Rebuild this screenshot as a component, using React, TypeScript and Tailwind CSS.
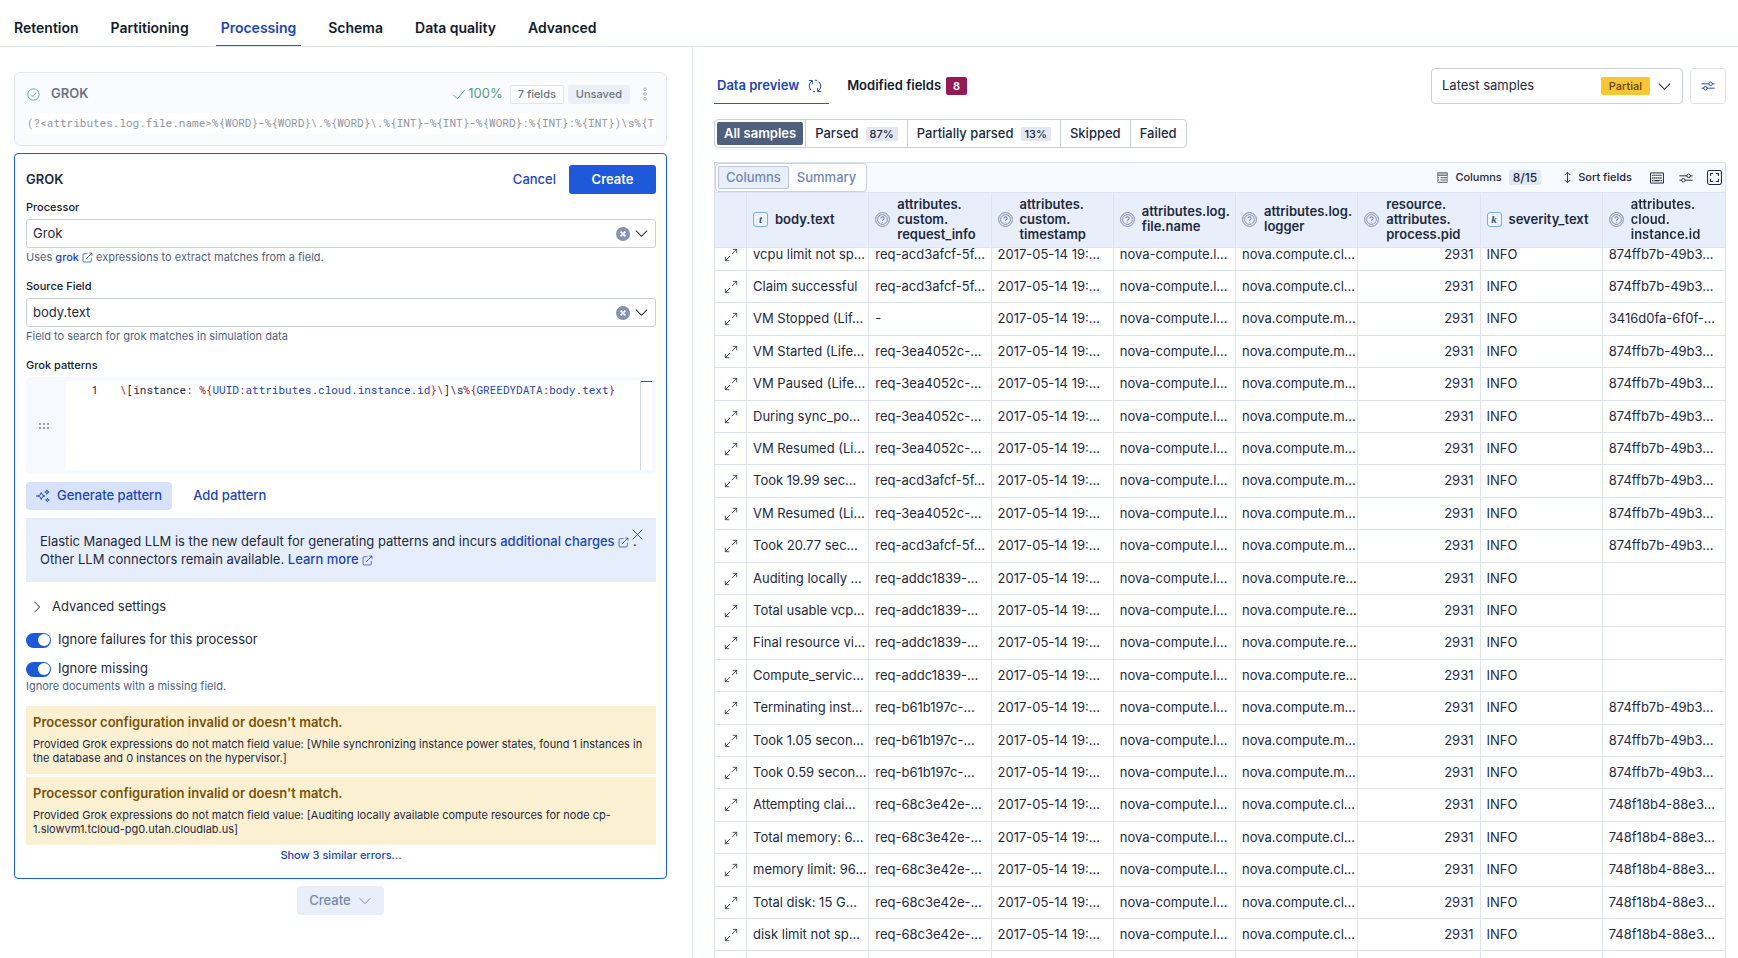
import React, { useLayoutEffect, useRef, useState } from 'react';
import clsx from 'clsx';

type IconProps = { className?: string };

const Svg: React.FC<IconProps & { children: React.ReactNode }> = ({ className, children }) => (
  <svg viewBox="0 0 16 16" fill="none" stroke="currentColor" strokeWidth={1.1} className={clsx('shrink-0', className)} aria-hidden="true">
    {children}
  </svg>
);

const ChevronDown = ({ className }: IconProps) => (
  <Svg className={className}><path d="M2 5l6 6 6-6" /></Svg>
);

const ChevronRight = ({ className }: IconProps) => (
  <Svg className={className}><path d="M5 2l6 6-6 6" /></Svg>
);

const Check = ({ className }: IconProps) => (
  <Svg className={className}><path d="M1.5 9l4.5 4.5L15 3" /></Svg>
);

const CheckCircle = ({ className }: IconProps) => (
  <Svg className={className}>
    <circle cx="8" cy="8" r="7" />
    <path d="M5 8.3l2.2 2.2L11.3 6" />
  </Svg>
);

const Cross = ({ className }: IconProps) => (
  <Svg className={className}><path d="M2 2l12 12M14 2L2 14" /></Svg>
);

const ClearIcon = ({ className }: IconProps) => (
  <svg viewBox="0 0 14 14" className={clsx('shrink-0', className)} aria-hidden="true">
    <circle cx="7" cy="7" r="7" fill="#8492b4" />
    <path d="M4.6 4.6l4.8 4.8M9.4 4.6L4.6 9.4" stroke="#fff" strokeWidth="1.7" />
  </svg>
);

const PopOut = ({ className }: IconProps) => (
  <Svg className={className}>
    <path d="M8 2.5H3A1.5 1.5 0 0 0 1.5 4v9A1.5 1.5 0 0 0 3 14.5h9a1.5 1.5 0 0 0 1.5-1.5V8.5" />
    <path d="M10.5 1.5h4v4M14.5 1.5L6 10" />
  </Svg>
);

const Dots = ({ className }: IconProps) => (
  <Svg className={className}>
    <circle cx="8" cy="2.6" r="1.5" />
    <circle cx="8" cy="8" r="1.5" />
    <circle cx="8" cy="13.4" r="1.5" />
  </Svg>
);

const Grab = ({ className }: IconProps) => (
  <svg viewBox="0 0 10 6" fill="currentColor" className={clsx('shrink-0', className)} aria-hidden="true">
    <circle cx="1" cy="1" r="0.8" />
    <circle cx="5" cy="1" r="0.8" />
    <circle cx="9" cy="1" r="0.8" />
    <circle cx="1" cy="5" r="0.8" />
    <circle cx="5" cy="5" r="0.8" />
    <circle cx="9" cy="5" r="0.8" />
  </svg>
);

const Sparkles = ({ className }: IconProps) => (
  <Svg className={className}>
    <path d="M6 4l1.2 2.8L10 8l-2.8 1.2L6 12l-1.2-2.8L2 8l2.8-1.2z" />
    <path d="M0 8h2" />
    <path d="M12.5 1l.7 1.8 1.8.7-1.8.7-.7 1.8-.7-1.8-1.8-.7 1.8-.7z" />
    <path d="M13 10.5l.6 1.5 1.5.6-1.5.6-.6 1.5-.6-1.5-1.5-.6 1.5-.6z" />
  </Svg>
);

const Refresh = ({ className }: IconProps) => (
  <Svg className={className}>
    <path d="M1 1.8h4v4M5 2A6.5 6.5 0 0 0 3.6 12.7" />
    <path d="M15 14.2h-4v-4M11 14A6.5 6.5 0 0 0 12.4 3.3" />
    <path d="M8 1.4a6.6 6.6 0 0 1 2.6.5M8 14.6a6.6 6.6 0 0 1-2.6-.5" />
  </Svg>
);

const Controls = ({ className }: IconProps) => (
  <Svg className={className}>
    <path d="M0.5 5.5H9M13 5.5h2.5M0.5 10.5H3M7 10.5h8.5" />
    <circle cx="11" cy="5.5" r="2" />
    <circle cx="5" cy="10.5" r="2" />
  </Svg>
);

const Expand = ({ className }: IconProps) => (
  <Svg className={className}>
    <path d="M10 1.5h4.5V6M14.5 1.5L9 7M6 14.5H1.5V10M1.5 14.5L7 9" strokeWidth="0.9" />
  </Svg>
);

const ListIcon = ({ className }: IconProps) => (
  <Svg className={className}>
    <path d="M1 1h14v4H1z" fill="currentColor" fillOpacity="0.3" strokeWidth="0.8" />
    <path d="M1 8.3h2M5 8.3h10M1 11.6h2M5 11.6h10M1 15h14" />
    <path d="M1 5v10M15 5v10" strokeWidth="0.6" />
  </Svg>
);

const SortIcon = ({ className }: IconProps) => (
  <Svg className={className}>
    <path d="M8 1.5v13M4.5 5L8 1.5 11.5 5M4.5 11L8 14.5l3.5-3.5" />
  </Svg>
);

const Keyboard = ({ className }: IconProps) => (
  <Svg className={className}>
    <path d="M.6 2.2h14.8v11.6H.6z" />
    <path d="M2.5 5h11M2.5 8h11" strokeWidth="1.6" strokeDasharray="1.5 .8" />
    <path d="M2.5 11H4M5 11h6M12 11h1.5" strokeWidth="1.6" />
  </Svg>
);

const FullScreen = ({ className }: IconProps) => (
  <Svg className={className}>
    <rect x=".6" y=".6" width="14.8" height="14.8" rx="2" />
    <path d="M3.8 6.5V3.8h2.7M9.5 3.8h2.7v2.7M12.2 9.5v2.7H9.5M6.5 12.2H3.8V9.5" />
  </Svg>
);

const TokenUnknown = () => (
  <Svg className="size-[15px] text-[#6f7f9f]">
    <circle cx="8" cy="8" r="7.4" strokeWidth={0.9} />
    <circle cx="8" cy="8" r="5.2" strokeWidth={0.9} />
    <path d="M6.3 6.8a1.7 1.7 0 1 1 2.4 1.5c-.5.2-.7.5-.7 1.1M8 10.3v1" />
  </Svg>
);

const TokenLetter: React.FC<{ letter: string }> = ({ letter }) => (
  <span className="flex size-[15px] shrink-0 items-center justify-center rounded-[3px] border border-[#7fa9f5] bg-[#edf3ff] font-['Liberation_Serif',serif] text-[11px] leading-none font-bold text-[#2f5187] italic">
    {letter}
  </span>
);

const link = 'font-medium text-[#1d46b5]';

const NAV = ['Retention', 'Partitioning', 'Processing', 'Schema', 'Data quality', 'Advanced'];

const FILTERS = [
  { label: 'All samples' },
  { label: 'Parsed', pct: '87%' },
  { label: 'Partially parsed', pct: '13%' },
  { label: 'Skipped' },
  { label: 'Failed' },
];

const COLUMNS = [
  { token: 't', lines: ['body.text'] },
  { lines: ['attributes.', 'custom.', 'request_info'] },
  { lines: ['attributes.', 'custom.', 'timestamp'] },
  { lines: ['attributes.log.', 'file.name'] },
  { lines: ['attributes.log.', 'logger'] },
  { lines: ['resource.', 'attributes.', 'process.pid'] },
  { token: 'k', lines: ['severity_text'] },
  { lines: ['attributes.', 'cloud.', 'instance.id'] },
];

const ACD = 'req-acd3afcf-5f…';
const EA4 = 'req-3ea4052c-…';
const ADD = 'req-addc1839-…';
const B61 = 'req-b61b197c-…';
const C3E = 'req-68c3e42e-…';
const I874 = '874ffb7b-49b3…';
const I748 = '748f18b4-88e3…';

// body, request, logger, instance
const ROWS: [string, string, string, string][] = [
  ['vcpu limit not sp…', ACD, 'cl…', I874],
  ['Claim successful', ACD, 'cl…', I874],
  ['VM Stopped (Lif…', '-', 'm…', '3416d0fa-6f0f-…'],
  ['VM Started (Life…', EA4, 'm…', I874],
  ['VM Paused (Life…', EA4, 'm…', I874],
  ['During sync_po…', EA4, 'm…', I874],
  ['VM Resumed (Li…', EA4, 'm…', I874],
  ['Took 19.99 sec…', ACD, 'm…', I874],
  ['VM Resumed (Li…', EA4, 'm…', I874],
  ['Took 20.77 sec…', ACD, 'm…', I874],
  ['Auditing locally …', ADD, 're…', ''],
  ['Total usable vcp…', ADD, 're…', ''],
  ['Final resource vi…', ADD, 're…', ''],
  ['Compute_servic…', ADD, 're…', ''],
  ['Terminating inst…', B61, 'm…', I874],
  ['Took 1.05 secon…', B61, 'm…', I874],
  ['Took 0.59 secon…', B61, 'm…', I874],
  ['Attempting clai…', C3E, 'cl…', I748],
  ['Total memory: 6…', C3E, 'cl…', I748],
  ['memory limit: 96…', C3E, 'cl…', I748],
  ['Total disk: 15 G…', C3E, 'cl…', I748],
  ['disk limit not sp…', C3E, 'cl…', I748],
  ['', '', '', ''],
];

const WARNINGS = [
  'Provided Grok expressions do not match field value: [While synchronizing instance power states, found 1 instances in the database and 0 instances on the hypervisor.]',
  'Provided Grok expressions do not match field value: [Auditing locally available compute resources for node cp-1.slowvm1.tcloud-pg0.utah.cloudlab.us]',
];

const ComboField: React.FC<{ id: string; label: string; value: string; help: React.ReactNode }> = ({ id, label, value, help }) => (
  <div>
    <label htmlFor={id} className="mb-1 block text-[11px] leading-4 font-medium text-[#111c2c]">{label}</label>
    <div className="flex h-[29px] items-center rounded-[3px] border border-[#c9d2e2] pr-[6px]">
      <select id={id} defaultValue={value} className="h-full min-w-0 flex-1 appearance-none bg-transparent px-[6px] text-[13px] outline-none">
        <option>{value}</option>
      </select>
      <button type="button" aria-label={`Clear ${label}`}><ClearIcon className="size-[14px]" /></button>
      <ChevronDown className="ml-1 size-[15px]" />
    </div>
    <p className="mt-px text-[11px] leading-4 text-[#516381]">{help}</p>
  </div>
);

const Switch: React.FC<{ id: string; label: string }> = ({ id, label }) => {
  const [on, setOn] = useState(true);
  return (
    <div className="flex h-[18px] items-center gap-[7px]">
      <input
        id={id}
        type="checkbox"
        role="switch"
        checked={on}
        onChange={() => setOn(!on)}
        className="flex h-[15px] w-[25px] shrink-0 appearance-none items-center rounded-full bg-[#8492b4] px-px before:size-[12px] before:rounded-full before:bg-white checked:justify-end checked:bg-[#1e59d9]"
      />
      <label htmlFor={id} className="text-[13px]">{label}</label>
    </div>
  );
};

const SavedProcessor = () => (
  <section className="rounded-md border border-[#e1e6f1] bg-[#fafbfd] pt-[11px] pr-[10px] pb-[11px] pl-[11px]">
    <div className="flex h-5 items-center">
      <CheckCircle className="ml-px size-[13px] text-[#5fa58a]" />
      <h3 className="ml-[11px] flex-1 text-[13px] font-semibold text-[#6d7480]">GROK</h3>
      <Check className="size-[14px] text-[#5b9c83]" />
      <span className="ml-[2px] text-[13px] text-[#5b9c83]">100%</span>
      <span className="ml-[7px] flex h-[19px] items-center rounded-[2px] border border-[#dfe4ef] bg-white px-[7px] text-[11px] font-medium text-[#6d7480]">7 fields</span>
      <span className="ml-1 flex h-[19px] items-center rounded-[2px] bg-[#eceff8] px-2 text-[11px] font-medium text-[#6d7480]">Unsaved</span>
      <button type="button" aria-label="Processor actions" className="mr-1 ml-2"><Dots className="size-[14px] text-[#a3b1cb]" /></button>
    </div>
    <code className="mt-[9px] block h-[21px] overflow-hidden rounded-[3px] bg-white px-px font-['Roboto_Mono','Liberation_Mono',monospace] text-[11px] leading-[20px] whitespace-nowrap text-[#8e96a5]">
      {'(?<attributes.log.file.name>%{WORD}-%{WORD}\\.%{WORD}\\.%{INT}-%{INT}-%{WORD}:%{INT}:%{INT})\\s%{T'}
    </code>
  </section>
);

const R: React.FC<{ children: React.ReactNode }> = ({ children }) => <span className="text-[#a71627]">{children}</span>;
const B: React.FC<{ children: React.ReactNode }> = ({ children }) => <span className="text-[#1d46b5]">{children}</span>;

const PatternEditor = () => (
  <div className="flex h-[97px] rounded bg-[#f6f9fd] py-1 pr-1">
    <button type="button" aria-label="Reorder pattern" className="flex w-10 items-center pl-[13px]"><Grab className="h-[6px] w-[10px]" /></button>
    <div className="flex min-w-0 flex-1 bg-white font-['Roboto_Mono','Liberation_Mono',monospace] text-[11px] leading-[18px]">
      <span className="w-8 text-right">1</span>
      <div
        role="textbox"
        aria-label="Grok patterns"
        contentEditable
        suppressContentEditableWarning
        spellCheck={false}
        className="ml-[22px] flex-1 overflow-hidden whitespace-pre outline-none"
      >
        <R>{'\\'}</R>{'[instance'}<R>{': %{'}</R><B>UUID</B><R>:</R><B>attributes.cloud.instance.id</B><R>{'}\\'}</R>{']\\s'}<R>{'%{'}</R><B>GREEDYDATA</B><R>:</R><B>body.text</B><R>{'}'}</R>
      </div>
      <div className="w-3 border-l border-[#d3d6db]"><div className="h-px bg-[#4c5872]" /></div>
    </div>
  </div>
);

const ProcessorForm = () => (
  <form onSubmit={(e) => e.preventDefault()} className="mt-[7px] rounded border border-[#1e59d9] pt-[11px] pr-[10px] pb-[15px] pl-[11px]">
    <div className="mb-[5px] flex h-[29px] items-center">
      <h3 className="flex-1 text-[13px] font-semibold">GROK</h3>
      <button type="button" className={clsx(link, 'text-[13px]')}>Cancel</button>
      <button type="submit" className="ml-[13px] h-full w-[87px] rounded-[3px] bg-[#1e59d9] text-[13px] font-semibold text-white">Create</button>
    </div>

    <div className="flex flex-col gap-[13px]">
      <ComboField
        id="processor"
        label="Processor"
        value="Grok"
        help={<>Uses <a href="#grok" className={link}>grok <PopOut className="inline size-[11px] align-[-2px]" /></a> expressions to extract matches from a field.</>}
      />
      <ComboField id="source" label="Source Field" value="body.text" help="Field to search for grok matches in simulation data" />
      <div>
        <p className="mb-1 text-[11px] leading-4 font-medium text-[#111c2c]">Grok patterns</p>
        <PatternEditor />
      </div>
    </div>

    <div className="mt-2 flex h-7">
      <button type="button" className={clsx(link, 'flex items-center gap-[7px] rounded bg-[#d7e3fe] px-[10px] text-[13px]')}>
        <Sparkles className="size-[14px]" />
        Generate pattern
      </button>
      <button type="button" className={clsx(link, 'px-[21px] text-[13px]')}>Add pattern</button>
    </div>

    <div className="relative mt-2 bg-[#e6eefe] py-[14px] pr-2 pl-[14px] text-[13px] leading-[18px]">
      <p>
        Elastic Managed LLM is the new default for generating patterns and incurs{' '}
        <a href="#charges" className={link}>additional charges <PopOut className="mr-1 inline size-[11px] align-[-2px]" /></a>.
      </p>
      <p>Other LLM connectors remain available. <a href="#learn" className={link}>Learn more <PopOut className="inline size-[11px] align-[-2px]" /></a></p>
      <button type="button" aria-label="Dismiss" className="absolute top-[10px] right-3 text-[#1d46b5]"><Cross className="size-[13px]" /></button>
    </div>

    <button type="button" className="mt-4 flex h-[18px] items-center gap-2 pl-1 text-[13px]">
      <ChevronRight className="size-[14px]" />
      Advanced settings
    </button>
    <div className="mt-[15px]"><Switch id="ignore-failures" label="Ignore failures for this processor" /></div>
    <div className="mt-[11px]"><Switch id="ignore-missing" label="Ignore missing" /></div>
    <p className="text-[11px] leading-4 text-[#516381]">Ignore documents with a missing field.</p>

    <div className="mt-3 flex flex-col gap-[3px]">
      {WARNINGS.map((text) => (
        <div key={text} className="bg-[#fcf0d3] px-[7px] pt-[7px] pb-[9px]">
          <p className="text-[13px] leading-[18px] font-semibold text-[#7a5207]">Processor configuration invalid or doesn't match.</p>
          <p className="mt-[6px] text-[11px] leading-[14px]">{text}</p>
        </div>
      ))}
    </div>
    <button type="button" className={clsx(link, 'mx-auto mt-[2px] block text-[11px] leading-4')}>Show 3 similar errors...</button>
  </form>
);

const FilterGroup = () => {
  const [active, setActive] = useState('All samples');
  return (
    <div className="mt-[15px] flex h-[29px] w-fit rounded border border-[#c9d2e2]">
      {FILTERS.map(({ label, pct }) => (
        <div key={label} className="flex border-l border-[#c9d2e2] p-[2px] first:border-l-0">
          <button
            type="button"
            aria-pressed={active === label}
            onClick={() => setActive(label)}
            className={clsx(
              'flex items-center gap-[7px] rounded-[2px] px-[7px] text-[13px] font-medium',
              active === label && 'bg-[#4f607f] font-semibold text-white'
            )}
          >
            {label}
            {pct && <span className="rounded-[2px] bg-[#e3e6f3] px-1 text-[11px] leading-[14px]">{pct}</span>}
          </button>
        </div>
      ))}
    </div>
  );
};

const PreviewGrid = () => {
  const scroller = useRef<HTMLDivElement>(null);

  useLayoutEffect(() => {
    if (scroller.current) scroller.current.scrollTop = 9;
  }, []);

  return (
    <div className="mt-[14px] flex min-h-0 flex-1 flex-col border-x border-t border-[#dfe3f1]">
      <div className="flex h-[30px] shrink-0 items-center border-b border-[#dfe3f1] bg-[#f6f9fd] pr-[3px] text-[11px] font-medium">
        <div className="flex h-[29px] rounded border border-[#c9d2e2] bg-white p-[2px] text-[13px] text-[#7388ae]">
          <button type="button" className="rounded-[2px] border border-[#b9c6de] bg-[#e8eefa] px-[7px]">Columns</button>
          <button type="button" className="px-2">Summary</button>
        </div>
        <button type="button" className="ml-auto flex items-center gap-[7px]">
          <ListIcon className="size-[11px]" />
          Columns
          <span className="rounded-[2px] bg-[#e3e6f3] px-1 text-[12px] leading-[15px]">8/15</span>
        </button>
        <button type="button" className="ml-[20px] flex items-center gap-1">
          <SortIcon className="size-[13px]" />
          Sort fields
        </button>
        <button type="button" aria-label="Keyboard shortcuts" className="ml-[18px]"><Keyboard className="size-[14px]" /></button>
        <button type="button" aria-label="Display options" className="ml-[15px]"><Controls className="size-[14px]" /></button>
        <button type="button" aria-label="Full screen" className="ml-[14px]"><FullScreen className="size-[15px]" /></button>
      </div>

      <div ref={scroller} className="min-h-0 flex-1 overflow-y-auto [scrollbar-width:none]">
        <table className="w-full table-fixed border-separate border-spacing-0 text-[13px]">
          <thead className="sticky top-0 z-10 bg-[#e8eefa]">
            <tr className="h-[55px]">
              <th className="w-8 border-r border-b border-[#dfe3f1]" aria-label="Expand" />
              {COLUMNS.map(({ token, lines }) => (
                <th key={lines.join('')} className="border-r border-b border-[#dfe3f1] px-[6px] pt-0 pb-[2px] text-left font-semibold last:border-r-0">
                  <div className="flex items-center gap-[7px] leading-[15px]">
                    {token ? <TokenLetter letter={token} /> : <TokenUnknown />}
                    <span className="whitespace-nowrap">
                      {lines.map((l) => <span key={l} className="block">{l}</span>)}
                    </span>
                  </div>
                </th>
              ))}
            </tr>
          </thead>
          <tbody>
            {ROWS.map(([body, request, logger, instance], i) => (
              <tr
                key={i}
                className="h-8 nth-[5n]:h-[33px] nth-[5n+3]:h-[33px] *:overflow-hidden *:border-r *:border-b *:border-[#dfe3f1] *:px-[6px] *:whitespace-nowrap *:last:border-r-0"
              >
                <td>
                  {body && <button type="button" aria-label="View details" className="mx-auto flex"><Expand className="size-[14px]" /></button>}
                </td>
                <td>{body}</td>
                <td>{request}</td>
                <td>{body && '2017-05-14 19:…'}</td>
                <td>{body && 'nova-compute.l…'}</td>
                <td>{logger && `nova.compute.${logger}`}</td>
                <td className="text-right">{body && '2931'}</td>
                <td>{body && 'INFO'}</td>
                <td>{instance}</td>
              </tr>
            ))}
          </tbody>
        </table>
      </div>
    </div>
  );
};

const App: React.FC = () => (
  <div className="flex h-screen flex-col overflow-hidden bg-white font-[Inter,sans-serif] text-[13px] text-[#1d2a3e]">
    <nav className="flex h-[47px] shrink-0 gap-[22px] border-b border-[#dfe3f1] px-[9px] pt-[10px]">
      {NAV.map((item) => (
        <a
          key={item}
          href={`#${item}`}
          className={clsx(
            'flex items-center border-b px-[5px] text-[14px] font-semibold',
            item === 'Processing' ? 'border-[#1e59d9] text-[#1d46b5]' : 'border-transparent text-[#111c2c]'
          )}
        >
          {item}
        </a>
      ))}
    </nav>

    <main className="grid min-h-0 flex-1 grid-cols-[minmax(0,693fr)_minmax(0,1045fr)]">
      <div className="overflow-hidden border-r border-[#dfe3f1] pt-[25px] pr-[25px] pl-[14px]">
        <SavedProcessor />
        <ProcessorForm />
        <button type="button" disabled className="mx-auto mt-[7px] flex h-[29px] items-center gap-[7px] rounded bg-[#e8eefa] px-3 text-[13px] font-medium text-[#7388ae]">
          Create
          <ChevronDown className="size-[14px]" />
        </button>
      </div>

      <div className="flex min-h-0 flex-col pt-[21px] pr-3 pl-[21px]">
        <div className="flex h-9 shrink-0 items-stretch text-[13px] font-semibold">
          <div className="flex items-center gap-[9px] border-b border-[#1e59d9] pr-[7px] pl-[3px] text-[#1d46b5]">
            <button type="button">Data preview</button>
            <button type="button" aria-label="Refresh"><Refresh className="size-[14px]" /></button>
          </div>
          <button type="button" className="ml-[18px] flex items-center gap-[5px] text-[#111c2c]">
            Modified fields
            <span className="flex h-[18px] w-[21px] items-center justify-center rounded-[2px] bg-[#931a55] text-[11px] text-white">8</span>
          </button>
          <div className="ml-auto flex w-[252px] items-center rounded border border-[#c9d2e2] pr-[10px] font-normal">
            <select aria-label="Samples" className="h-full min-w-0 flex-1 appearance-none bg-transparent px-[10px] outline-none">
              <option>Latest samples</option>
            </select>
            <span className="flex h-[18px] items-center rounded-[2px] bg-[#f9c535] px-2 text-[11px] font-medium text-[#5c4307]">Partial</span>
            <ChevronDown className="ml-[7px] size-[15px]" />
          </div>
          <button type="button" aria-label="Sample settings" className="ml-[7px] flex w-9 items-center justify-center rounded border border-[#dfe3f1] text-[#1d46b5]">
            <Controls className="size-[14px]" />
          </button>
        </div>
        <FilterGroup />
        <PreviewGrid />
      </div>
    </main>
  </div>
);

export default App;
